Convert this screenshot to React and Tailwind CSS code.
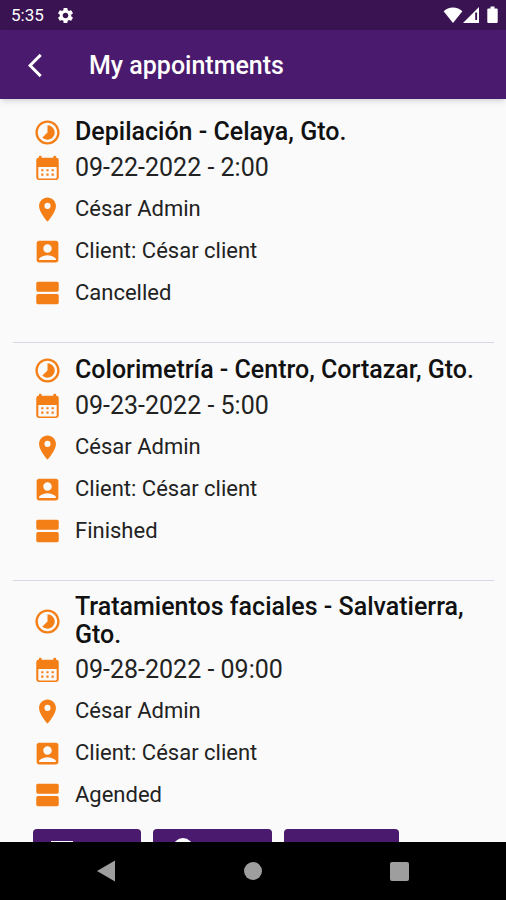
import React from 'react';
import {
    MdAccountBox,
    MdArrowBackIosNew,
    MdLocationOn,
    MdSettings,
    MdTimelapse,
} from 'react-icons/md';

const appointments = [
    {
        id: 1,
        title: 'Depilación - Celaya, Gto.',
        date: '09-22-2022 - 2:00',
        employee: 'César Admin',
        client: 'César client',
        status: 'Cancelled',
    },
    {
        id: 2,
        title: 'Colorimetría - Centro, Cortazar, Gto.',
        date: '09-23-2022 - 5:00',
        employee: 'César Admin',
        client: 'César client',
        status: 'Finished',
    },
    {
        id: 3,
        title: 'Tratamientos faciales - Salvatierra, Gto.',
        date: '09-28-2022 - 09:00',
        employee: 'César Admin',
        client: 'César client',
        status: 'Agended',
        editable: true,
    },
];

const AgendaIcon = ({ className }) => (
    <svg viewBox="0 0 24 24" fill="currentColor" className={className} aria-hidden="true">
        <rect x="2.7" y="2.2" width="18.6" height="8.4" rx="1.4" />
        <rect x="2.7" y="12.4" width="18.6" height="8.4" rx="1.4" />
    </svg>
);

const CalendarIcon = ({ className }) => (
    <svg viewBox="0 0 24 24" fill="currentColor" className={className} aria-hidden="true">
        <rect x="4.8" y="1.4" width="2.4" height="4" rx="1" />
        <rect x="16.8" y="1.4" width="2.4" height="4" rx="1" />
        <path d="M4.700 3h14.600q2 0 2 2v14.500q0 2-2 2H4.700q-2 0-2-2V5q0-2 2-2zM4.400 10.800v8.400q0 1 1 1h13.200q1 0 1-1v-8.400z" fillRule="evenodd" />
        <path d="M6.800 12.600h1.800v1.700H6.800zm4.300 0h1.800v1.700h-1.800zm4.300 0h1.800v1.700h-1.800zM6.800 16.200h1.800v1.700H6.800zm4.300 0h1.800v1.700h-1.800zm4.300 0h1.800v1.700h-1.800z" />
    </svg>
);

const StatusBar = () => (
    <div className="flex h-[30px] shrink-0 items-center justify-between bg-[#3a1452] pl-[11px] pr-[3px] text-white">
        <div className="flex items-center gap-3">
            <span className="text-[17px] leading-5">5:35</span>
            <MdSettings className="size-[19px]" />
        </div>
        <div className="flex items-center">
            <svg viewBox="0 0 20 18" className="h-[18px] w-5" fill="currentColor" aria-hidden="true">
                <path d="M10 17 0.6 5.2C3 2.8 6.300 1.400 10 1.400s7 1.400 9.400 3.800z" />
            </svg>
            <svg viewBox="0 0 17 18" className="h-[18px] w-[17px]" fill="currentColor" aria-hidden="true">
                <path d="M0 17 16 1v16z" />
                <path d="M12.200 6.500h1.900v7.500h-1.900z" fill="#3a1452" />
            </svg>
            <svg viewBox="0 0 21 18" className="ml-0.5 h-[18px] w-[21px]" fill="currentColor" aria-hidden="true">
                <path d="M8.500 0.600h4v1.800h2.200q1 0 1 1V16q0 1-1 1H6.300q-1 0-1-1V3.400q0-1 1-1h2.200z" />
            </svg>
        </div>
    </div>
);

const AppBar = () => (
    <header className="z-10 flex h-[69px] shrink-0 items-center bg-[#4a1a6e] px-[21px] pt-0.5 text-white shadow-md">
        <button type="button" aria-label="Back" className="flex size-7 items-center justify-center">
            <MdArrowBackIosNew className="size-[29px]" />
        </button>
        <h1 className="ml-10 text-[25px] font-medium leading-8">My appointments</h1>
    </header>
);

const Row = ({ icon: Icon, children, className = 'min-h-[42px] text-[22px]' }) => (
    <div className={`flex items-center gap-[13px] ${className}`}>
        <Icon className="size-[29px] shrink-0 text-[#f57f17]" />
        <p className="leading-7">{children}</p>
    </div>
);

const AppointmentCard = ({ item }) => (
    <li className="border-b border-[#d9d5e3] pb-7 pl-5 pr-4 pt-[11px]">
        <div className="flex min-h-8 items-center gap-[13px] py-px">
            <MdTimelapse className="size-[29px] shrink-0 text-[#f57f17]" />
            <h2 className="text-[25px] font-medium leading-7 text-[#111111]">{item.title}</h2>
        </div>
        <Row icon={CalendarIcon} className="min-h-10 text-[25px]">{item.date}</Row>
        <Row icon={MdLocationOn}>{item.employee}</Row>
        <Row icon={MdAccountBox}>Client: {item.client}</Row>
        <Row icon={AgendaIcon}>{item.status}</Row>

        {item.editable && (
            <div className="mt-[13px] flex gap-3">
                <button type="button" aria-label="Edit appointment" className="flex h-12 w-[108px] items-start rounded bg-[#4a1a6e] px-[18px] pt-3 text-white">
                    <svg viewBox="0 0 22 22" className="size-[22px]" fill="none" stroke="currentColor" aria-hidden="true">
                        <rect x="0.5" y="0.5" width="21" height="18" />
                    </svg>
                </button>
                <button type="button" aria-label="Finish appointment" className="flex h-12 w-[119px] items-start rounded bg-[#4a1a6e] px-5 pt-[9px] text-white">
                    <svg viewBox="0 0 20 20" className="size-5" fill="currentColor" aria-hidden="true">
                        <circle cx="10" cy="10" r="10" />
                    </svg>
                </button>
                <button type="button" aria-label="Cancel appointment" className="h-12 w-[115px] rounded bg-[#4a1a6e]" />
            </div>
        )}
    </li>
);

const NavigationBar = () => (
    <nav className="grid h-[58px] shrink-0 grid-cols-3 items-center bg-black px-[34px] text-[#9e9e9e]">
        <button type="button" aria-label="System back" className="flex justify-center">
            <svg viewBox="0 0 20 22" className="h-[22px] w-5" fill="currentColor" aria-hidden="true">
                <path d="M0 11 18 .5v21z" />
            </svg>
        </button>
        <button type="button" aria-label="Home" className="flex justify-center">
            <span className="size-[18px] rounded-full bg-current" />
        </button>
        <button type="button" aria-label="Recent apps" className="flex justify-center">
            <span className="size-[19px] rounded-[2px] bg-current" />
        </button>
    </nav>
);

const App = () => {
    return (
        <div className="flex h-screen flex-col overflow-hidden bg-[#fafafa] font-['Roboto',sans-serif] text-[#222222]">
            <StatusBar />
            <AppBar />
            <main className="min-h-0 flex-1 overflow-hidden pl-[13px] pr-3 pt-[6px]">
                <ul>
                    {appointments.map((item) => (
                        <AppointmentCard key={item.id} item={item} />
                    ))}
                </ul>
            </main>
            <NavigationBar />
        </div>
    );
};

export default App;
